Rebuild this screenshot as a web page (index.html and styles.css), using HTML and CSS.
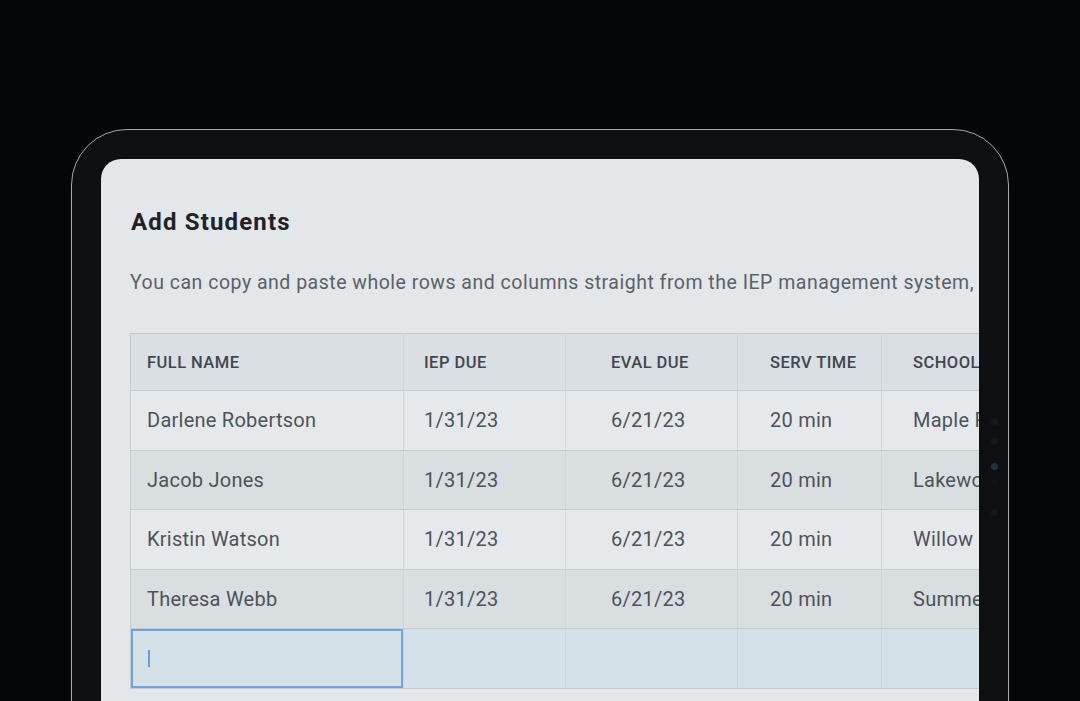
FILE: index.html
```html
<!DOCTYPE html>
<html>
<head>
<meta charset="utf-8">
<link rel="stylesheet" href="styles.css">
</head>
<body>
<div class="device">
  <div class="cam">
    <span class="dot d1"></span>
    <span class="dot d2"></span>
    <span class="dot d3 lens"></span>
    <span class="dot d4 faint"></span>
    <span class="dot d5"></span>
  </div>
  <div class="screen">
    <h1 class="title">Add Students</h1>
    <p class="intro">You can copy and paste whole rows and columns straight from the IEP management system,</p>
    <table class="grid">
      <colgroup>
        <col class="c-name"><col class="c-iep"><col class="c-eval"><col class="c-serv"><col class="c-school">
      </colgroup>
      <thead>
        <tr><th>Full Name</th><th class="pad-iep">IEP Due</th><th class="pad-eval">Eval Due</th><th class="pad-serv">Serv Time</th><th class="pad-school">School</th></tr>
      </thead>
      <tbody>
        <tr class="odd"><td>Darlene Robertson</td><td class="pad-iep">1/31/23</td><td class="pad-eval">6/21/23</td><td class="pad-serv">20 min</td><td class="pad-school">Maple Ridge</td></tr>
        <tr class="even"><td>Jacob Jones</td><td class="pad-iep">1/31/23</td><td class="pad-eval">6/21/23</td><td class="pad-serv">20 min</td><td class="pad-school">Lakewood</td></tr>
        <tr class="odd"><td>Kristin Watson</td><td class="pad-iep">1/31/23</td><td class="pad-eval">6/21/23</td><td class="pad-serv">20 min</td><td class="pad-school">Willow Creek</td></tr>
        <tr class="even"><td>Theresa Webb</td><td class="pad-iep">1/31/23</td><td class="pad-eval">6/21/23</td><td class="pad-serv">20 min</td><td class="pad-school">Summerfield</td></tr>
        <tr class="input-row"><td class="active"><span class="caret"></span></td><td></td><td></td><td></td><td></td></tr>
      </tbody>
    </table>
  </div>
</div>
</body>
</html>
```

FILE: styles.css
```css
* { box-sizing: border-box; }
html, body {
  margin: 0;
  padding: 0;
  width: 1080px;
  height: 701px;
  overflow: hidden;
  background: #040609;
  font-family: Roboto, "Liberation Sans", sans-serif;
}
.device {
  position: relative;
  margin: 129px 0 0 71px;
  width: 938px;
  height: 700px;
  background: #0d0f11;
  border: 1.5px solid #a4a8ac;
  border-radius: 56px;
  padding: 29px 29px 0 29px;
}
.cam {
  position: absolute;
  right: 10px;
  top: 0;
  display: flex;
  flex-direction: column;
}
.dot {
  width: 7px;
  height: 7px;
  border-radius: 50%;
  background: #14181b;
}
.d1 { margin-top: 288px; }
.d2 { margin-top: 13px; }
.d3 { margin-top: 18px; }
.d4 { margin-top: 9px; }
.d5 { margin-top: 23px; }
.dot.lens { background: #1c3140; }
.dot.faint { background: #101315; }
.screen {
  width: 878px;
  height: 660px;
  background: #e3e7e9;
  border-radius: 20px;
  overflow: hidden;
  padding: 48px 0 0 29px;
}
.title {
  margin: 0 0 0 1px;
  font-size: 24px;
  font-weight: 700;
  color: #1f2327;
  line-height: 30px;
  letter-spacing: 1.15px;
}
.intro {
  margin: 34px 0 0 0;
  font-size: 19.5px;
  color: #5b6169;
  white-space: nowrap;
  line-height: 24px;
  letter-spacing: 0.5px;
}
.grid {
  margin-top: 38px;
  border-collapse: collapse;
  table-layout: fixed;
  width: 1000px;
  border-top: 1.5px solid #c3c9cd;
  border-left: 1.5px solid #c6ccd0;
}
.c-name { width: 273px; }
.c-iep { width: 162px; }
.c-eval { width: 172px; }
.c-serv { width: 144px; }
.c-school { width: 249px; }
th, td {
  text-align: left;
  padding: 0 0 0 16px;
  border-right: 1px solid #d0d5d9;
  border-bottom: 1.5px solid #c5cbcf;
  white-space: nowrap;
  overflow: hidden;
}
th {
  height: 57px;
  background: #d9dfe3;
  font-size: 16.5px;
  font-weight: 500;
  text-transform: uppercase;
  color: #41474d;
  letter-spacing: 0.45px;
}
td {
  height: 59.5px;
  font-size: 20px;
  color: #4d5359;
  letter-spacing: 0.25px;
}
th.pad-iep, td.pad-iep { padding-left: 20px; }
th.pad-eval, td.pad-eval { padding-left: 45px; }
th.pad-serv, td.pad-serv { padding-left: 32px; }
th.pad-school, td.pad-school { padding-left: 31px; }
.odd td { background: #e6e9eb; }
.even td { background: #d9dee1; }
.input-row td { background: #d5e1e9; }
.input-row td.active {
  background: #d5e1e9;
  box-shadow: inset 0 0 0 2px #6ea6da;
  padding-left: 17px;
}
.caret {
  display: block;
  width: 1.5px;
  height: 17px;
  background: #6a9fd2;
}
```
